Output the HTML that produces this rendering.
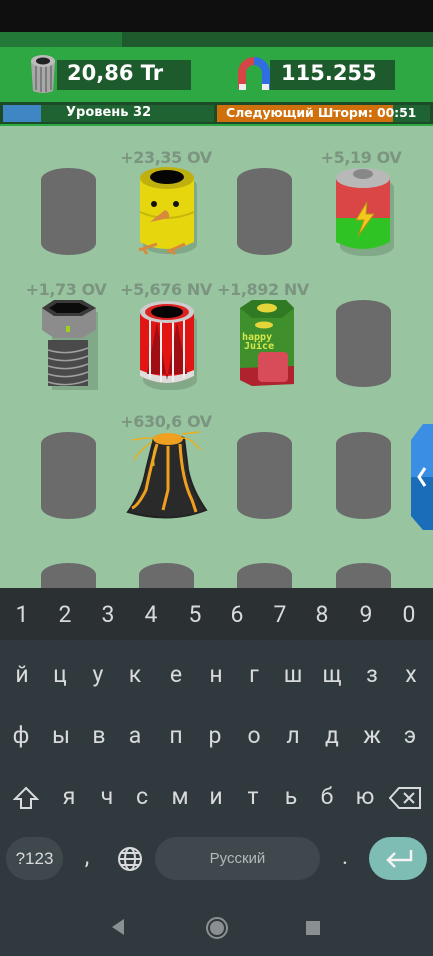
<!DOCTYPE html>
<html><head><meta charset="utf-8"><style>
*{margin:0;padding:0;box-sizing:border-box}
body{width:433px;height:956px;overflow:hidden;background:#303a3e;font-family:"Liberation Sans","DejaVu Sans",sans-serif;position:relative}
.a{position:absolute}
.lbl{position:absolute;color:#7b9580;font-weight:bold;font-size:16px;text-align:center;width:120px;font-family:"DejaVu Sans","Liberation Sans",sans-serif;letter-spacing:-0.4px}
.slot{position:absolute;width:55px;height:87px;background:#6b6b6b;border-radius:27px/12px}
.k{position:absolute;color:#d8dadb;font-size:23px;text-align:center;width:40px;font-family:"Roboto","Liberation Sans","DejaVu Sans",sans-serif}
.hud{font-family:"DejaVu Sans","Liberation Sans",sans-serif;font-weight:bold;color:#fff}
</style></head><body>
<div class="a" style="left:0;top:0;width:433px;height:32px;background:#0f0f0f"></div>
<div class="a" style="left:0;top:32px;width:433px;height:15px;background:#1e5a2c"></div>
<div class="a" style="left:0;top:32px;width:122px;height:15px;background:#237a38"></div>
<div class="a" style="left:0;top:47px;width:433px;height:54px;background:#2ea843"></div>
<div class="a" style="left:0;top:101px;width:433px;height:26px;background:#2ea843"></div>
<svg class="a" style="left:28px;top:53px" width="30" height="42" viewBox="0 0 30 42">
<path d="M3 8 L27 8 L25 38 Q15 42 5 38 Z" fill="#a8a8a8"/>
<g stroke="#7d7d7d" stroke-width="2"><line x1="8" y1="12" x2="8" y2="37"/><line x1="13" y1="12" x2="13" y2="39"/><line x1="18" y1="12" x2="18" y2="39"/><line x1="23" y1="12" x2="23" y2="37"/></g>
<ellipse cx="15" cy="8" rx="12" ry="6" fill="#bbb"/><ellipse cx="15" cy="8" rx="7" ry="3.5" fill="#222"/>
</svg>
<div class="a" style="left:57px;top:60px;width:134px;height:30px;background:#1d5a2c"></div>
<div class="a hud" style="left:67px;top:61px;font-size:21px">20,86 Tr</div>
<svg class="a" style="left:237px;top:55px" width="35" height="38" viewBox="0 0 35 38">
<path d="M17 2 A16 16 0 0 0 1 18 L1 34 L9 34 L9 18 A8 8 0 0 1 17 10 Z" fill="#d64545"/>
<path d="M17 2 A16 16 0 0 1 33 18 L33 34 L25 34 L25 18 A8 8 0 0 0 17 10 Z" fill="#2f6ee0"/>
<rect x="2" y="29" width="7" height="6" fill="#eee"/><rect x="25" y="29" width="7" height="6" fill="#eee"/>
</svg>
<div class="a" style="left:270px;top:60px;width:125px;height:30px;background:#1d5a2c"></div>
<div class="a hud" style="left:281px;top:61px;font-size:21px">115.255</div>
<div class="a" style="left:0;top:102px;width:433px;height:22px;background:#1c4a26"></div>
<div class="a" style="left:3px;top:105px;width:211px;height:17px;background:#1f6332"></div>
<div class="a" style="left:3px;top:105px;width:38px;height:17px;background:#3e86c4"></div>
<div class="a hud" style="left:66px;top:105px;font-size:13px">Уровень 32</div>
<div class="a" style="left:217px;top:105px;width:213px;height:17px;background:#1f6332"></div>
<div class="a" style="left:217px;top:105px;width:176px;height:17px;background:#d0700c"></div>
<div class="a hud" style="left:226px;top:105px;font-size:12.5px;white-space:nowrap;letter-spacing:-0.1px">Следующий Шторм: 00:51</div>
<div class="a" style="left:0;top:126px;width:433px;height:462px;background:#98c4a0"></div>
<div class="lbl" style="left:106px;top:148px">+23,35 OV</div>
<div class="lbl" style="left:301px;top:148px">+5,19 OV</div>
<div class="lbl" style="left:6px;top:280px">+1,73 OV</div>
<div class="lbl" style="left:106px;top:280px">+5,676 NV</div>
<div class="lbl" style="left:203px;top:280px">+1,892 NV</div>
<div class="lbl" style="left:106px;top:412px">+630,6 OV</div>
<div class="slot" style="left:41px;top:168px"></div>
<div class="slot" style="left:237px;top:168px"></div>
<div class="slot" style="left:336px;top:300px"></div>
<div class="slot" style="left:41px;top:432px"></div>
<div class="slot" style="left:237px;top:432px"></div>
<div class="slot" style="left:336px;top:432px"></div>
<div class="slot" style="left:41px;top:563px;height:25px;border-radius:27px 27px 0 0/12px 12px 0 0"></div>
<div class="slot" style="left:139px;top:563px;height:25px;border-radius:27px 27px 0 0/12px 12px 0 0"></div>
<div class="slot" style="left:237px;top:563px;height:25px;border-radius:27px 27px 0 0/12px 12px 0 0"></div>
<div class="slot" style="left:336px;top:563px;height:25px;border-radius:27px 27px 0 0/12px 12px 0 0"></div>
<svg class="a" style="left:137px;top:166px" width="62" height="92" viewBox="0 0 62 92">
<rect x="6" y="10" width="54" height="78" rx="24" ry="10" fill="#6a8e6f" opacity=".5"/>
<path d="M3 12 L3 76 Q30 90 57 76 L57 12 Z" fill="#e6d60e"/>
<path d="M3 46 Q30 58 57 46" stroke="#c4b60a" stroke-width="2" fill="none"/>
<ellipse cx="30" cy="12" rx="27" ry="11" fill="#bfb010"/><ellipse cx="30" cy="11" rx="17" ry="7" fill="#050505"/>
<circle cx="17" cy="38" r="3" fill="#111"/><circle cx="39" cy="38" r="3" fill="#111"/>
<path d="M13 56 L28 44 Q33 46 32 52 Z" fill="#d88a3c"/>
<path d="M2 84 L20 78 M6 82 L10 88 M30 86 L48 78 M33 84 L38 88" stroke="#d88a3c" stroke-width="3"/>
</svg>
<svg class="a" style="left:334px;top:166px" width="62" height="92" viewBox="0 0 62 92">
<rect x="6" y="12" width="54" height="78" rx="24" ry="10" fill="#6a8e6f" opacity=".5"/>
<path d="M2 12 L2 52 L56 52 L56 12 Z" fill="#da4545"/>
<path d="M2 52 L2 76 Q29 90 56 76 L56 52 Z" fill="#2fc424"/>
<ellipse cx="29" cy="12" rx="27" ry="10" fill="#b8b8b8"/><ellipse cx="29" cy="8" rx="10" ry="5" fill="#888"/>
<path d="M33 36 L22 54 L30 54 L24 70 L40 48 L32 48 Z" fill="#f2c81c" stroke="#b8901a"/>
</svg>
<svg class="a" style="left:40px;top:300px" width="62" height="92" viewBox="0 0 62 92">
<rect x="12" y="12" width="46" height="78" fill="#6a8e6f" opacity=".5"/>
<rect x="8" y="40" width="40" height="46" fill="#4a4a4a"/>
<g stroke="#a0a0a0" stroke-width="1.5" fill="none"><path d="M8 50 Q28 56 48 48 M8 58 Q28 64 48 56 M8 66 Q28 72 48 64 M8 74 Q28 80 48 72 M8 82 Q28 88 48 80"/></g>
<path d="M2 8 L14 0 L42 0 L56 8 L56 30 L42 38 L14 38 L2 30Z" fill="#8c8c8c"/>
<path d="M2 8 L14 0 L42 0 L56 8 L42 16 L14 16Z" fill="#3a3a3a"/>
<path d="M9 8 L17 3 L39 3 L49 8 L39 13 L17 13Z" fill="#0b0b0b"/>
<rect x="26" y="26" width="4" height="6" fill="#9bd21c"/>
</svg>
<svg class="a" style="left:137px;top:300px" width="62" height="92" viewBox="0 0 62 92">
<rect x="6" y="12" width="54" height="78" rx="24" ry="10" fill="#6a8e6f" opacity=".5"/>
<path d="M3 12 L3 76 Q30 90 57 76 L57 12 Z" fill="#e21515"/>
<path d="M3 70 Q30 82 57 70 L57 76 Q30 90 3 76Z" fill="#ddd"/>
<path d="M10 74 L20 22 L30 80 L40 22 L50 74" fill="#a00d12"/>
<g stroke="#eee" stroke-width="2"><line x1="13" y1="20" x2="13" y2="78"/><line x1="24" y1="22" x2="24" y2="82"/><line x1="36" y1="22" x2="36" y2="82"/><line x1="47" y1="20" x2="47" y2="78"/></g>
<ellipse cx="30" cy="12" rx="27" ry="11" fill="#ccc"/><ellipse cx="30" cy="12" rx="22" ry="8" fill="#d22"/><ellipse cx="30" cy="12" rx="16" ry="6" fill="#050505"/>
</svg>
<svg class="a" style="left:238px;top:300px" width="60" height="92" viewBox="0 0 60 92">
<path d="M2 8 L14 0 L48 0 L56 8 L56 84 L14 86 L2 80Z" fill="#3f8f2c"/>
<path d="M2 8 L14 0 L48 0 L56 8 L44 18 L14 18Z" fill="#2f7a22"/>
<ellipse cx="29" cy="8" rx="10" ry="4.5" fill="#e5d53a"/>
<ellipse cx="26" cy="25" rx="9" ry="3.5" fill="#e5d53a"/>
<text x="4" y="40" font-family="DejaVu Sans Mono,monospace" font-size="10" font-weight="bold" fill="#d8e84a">happy</text>
<text x="6" y="49" font-family="DejaVu Sans Mono,monospace" font-size="10" font-weight="bold" fill="#d8e84a">Juice</text>
<path d="M2 68 L56 66 L56 84 L14 86 L2 80Z" fill="#b0222e"/>
<rect x="20" y="52" width="30" height="30" rx="4" fill="#d84c5a"/>
</svg>
<svg class="a" style="left:122px;top:430px" width="94" height="92" viewBox="0 0 94 92">
<path d="M32 8 Q46 2 62 8 L66 40 Q70 60 84 80 Q48 94 6 82 Q20 62 24 40Z" fill="#2a2a2a" stroke="#222" stroke-width="2"/>
<ellipse cx="46" cy="9" rx="15" ry="6" fill="#f0a020"/>
<g stroke="#f0a020" stroke-width="3" fill="none"><path d="M35 14 Q28 40 24 60 Q16 76 10 78"/><path d="M46 16 L46 60 L41 80"/><path d="M58 14 Q60 50 70 70 L74 82"/></g>
<g stroke="#e8b020" stroke-width="1.5" fill="none"><path d="M32 8 Q20 8 10 10"/><path d="M30 12 Q16 22 12 30"/><path d="M60 8 Q70 8 78 20"/><path d="M60 4 L78 2"/><path d="M34 16 Q30 24 32 36"/></g>
</svg>
<svg class="a" style="left:411px;top:424px" width="22" height="106" viewBox="0 0 22 106">
<path d="M12 0 L22 0 L22 53 L0 53 L0 16Z" fill="#3a8ee4"/>
<path d="M0 53 L22 53 L22 106 L12 106 L0 92Z" fill="#1a6db8"/>
<path d="M14 44 L8 53 L14 62" stroke="#fff" stroke-width="3" fill="none"/>
</svg>
<div class="a" style="left:0;top:588px;width:433px;height:52px;background:#2b3033"></div>
<div class="k" style="left:2px;top:601px">1</div><div class="k" style="left:45px;top:601px">2</div><div class="k" style="left:88px;top:601px">3</div><div class="k" style="left:131px;top:601px">4</div><div class="k" style="left:175px;top:601px">5</div><div class="k" style="left:217px;top:601px">6</div><div class="k" style="left:260px;top:601px">7</div><div class="k" style="left:302px;top:601px">8</div><div class="k" style="left:346px;top:601px">9</div><div class="k" style="left:389px;top:601px">0</div>
<div class="k" style="left:2px;top:661px">й</div><div class="k" style="left:40px;top:661px">ц</div><div class="k" style="left:78px;top:661px">у</div><div class="k" style="left:115px;top:661px">к</div><div class="k" style="left:156px;top:661px">е</div><div class="k" style="left:196px;top:661px">н</div><div class="k" style="left:234px;top:661px">г</div><div class="k" style="left:273px;top:661px">ш</div><div class="k" style="left:312px;top:661px">щ</div><div class="k" style="left:352px;top:661px">з</div><div class="k" style="left:391px;top:661px">х</div>
<div class="k" style="left:1px;top:722px">ф</div><div class="k" style="left:41px;top:722px">ы</div><div class="k" style="left:79px;top:722px">в</div><div class="k" style="left:115px;top:722px">а</div><div class="k" style="left:156px;top:722px">п</div><div class="k" style="left:195px;top:722px">р</div><div class="k" style="left:234px;top:722px">о</div><div class="k" style="left:273px;top:722px">л</div><div class="k" style="left:312px;top:722px">д</div><div class="k" style="left:352px;top:722px">ж</div><div class="k" style="left:390px;top:722px">э</div>
<svg class="a" style="left:13px;top:786px" width="26" height="24" viewBox="0 0 26 24"><path d="M13 2 L24 13 L18 13 L18 22 L8 22 L8 13 L2 13Z" fill="none" stroke="#d8dadb" stroke-width="2"/></svg>
<div class="k" style="left:49px;top:783px">я</div><div class="k" style="left:87px;top:783px">ч</div><div class="k" style="left:122px;top:783px">с</div><div class="k" style="left:160px;top:783px">м</div><div class="k" style="left:196px;top:783px">и</div><div class="k" style="left:233px;top:783px">т</div><div class="k" style="left:271px;top:783px">ь</div><div class="k" style="left:307px;top:783px">б</div><div class="k" style="left:345px;top:783px">ю</div>
<svg class="a" style="left:389px;top:786px" width="33" height="24" viewBox="0 0 33 24"><path d="M10 2 L31 2 L31 22 L10 22 L1 12Z" fill="none" stroke="#d8dadb" stroke-width="2"/><path d="M15 7 L25 17 M25 7 L15 17" stroke="#d8dadb" stroke-width="2"/></svg>
<div class="a" style="left:6px;top:837px;width:57px;height:43px;border-radius:22px;background:#3f484c;color:#d8dadb;font-size:17px;text-align:center;line-height:43px">?123</div>
<div class="k" style="left:67px;top:843px">,</div>
<svg class="a" style="left:117px;top:846px" width="26" height="26" viewBox="0 0 26 26"><g fill="none" stroke="#d8dadb" stroke-width="2"><circle cx="13" cy="13" r="11"/><ellipse cx="13" cy="13" rx="5" ry="11"/><line x1="2" y1="13" x2="24" y2="13"/><path d="M4 7 H22 M4 19 H22"/></g></svg>
<div class="a" style="left:155px;top:837px;width:165px;height:43px;border-radius:22px;background:#3f484c;color:#b4b9bb;font-size:15px;text-align:center;line-height:43px">Русский</div>
<div class="k" style="left:325px;top:843px">.</div>
<div class="a" style="left:369px;top:837px;width:58px;height:43px;border-radius:22px;background:#7dbdb3"></div>
<svg class="a" style="left:384px;top:848px" width="30" height="22" viewBox="0 0 30 22"><path d="M27 2 L27 12 L4 12 M11 5 L4 12 L11 19" fill="none" stroke="#f4f4f4" stroke-width="2.5"/></svg>
<svg class="a" style="left:110px;top:918px" width="16" height="18" viewBox="0 0 16 18"><path d="M14 1 L2 9 L14 17Z" fill="#8a8f91"/></svg>
<svg class="a" style="left:205px;top:916px" width="24" height="24" viewBox="0 0 24 24"><circle cx="12" cy="12" r="10" fill="none" stroke="#8a8f91" stroke-width="2"/><circle cx="12" cy="12" r="7" fill="#8a8f91"/></svg>
<div class="a" style="left:306px;top:921px;width:14px;height:14px;background:#8a8f91"></div>
</body></html>
